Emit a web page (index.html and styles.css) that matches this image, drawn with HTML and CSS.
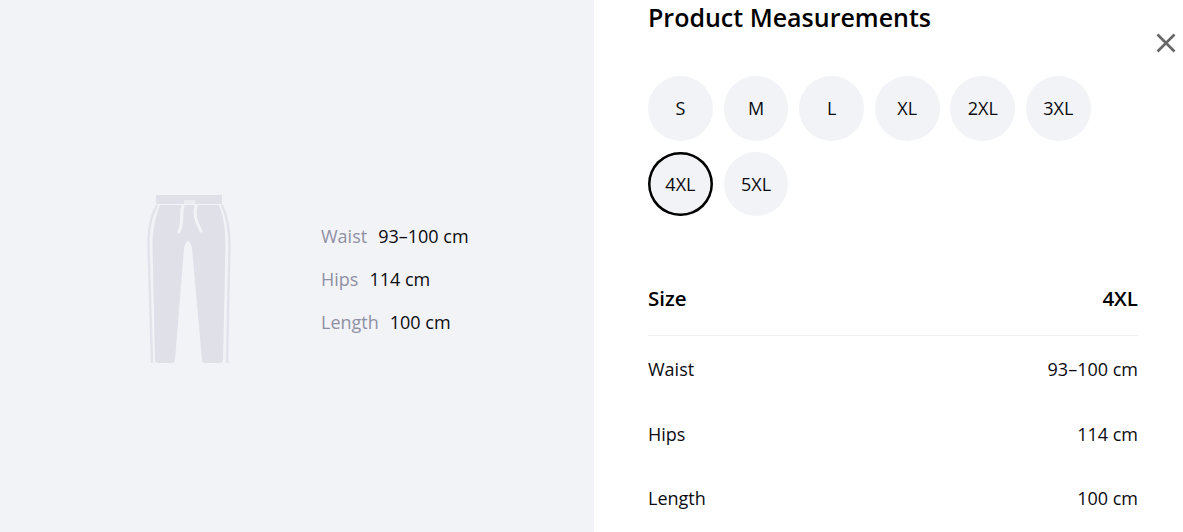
FILE: index.html
```html
<!DOCTYPE html>
<html lang="en">
<head>
<meta charset="utf-8">
<title>Product Measurements</title>
<link rel="stylesheet" href="styles.css">
</head>
<body>
<main class="modal">
  <section class="preview">
    <svg class="pants" width="120" height="195" viewBox="0 0 120 195" aria-hidden="true">
      <rect class="garment" x="26" y="15" width="66" height="9"/>
      <path class="garment" d="M30 25H89C94 38 95.500 50 95.500 66L93 180Q93 183 90 183H75Q72 183 72 180L62 68Q60 61 58 61T54 68L45 180Q45 183 42 183H28Q25 183 25 180L22.500 66C22.500 50 25 38 30 25Z"/>
      <path class="edge" d="M27 25C20 38 18.500 50 18.500 66L22 183M92 25C98 38 99.500 50 99.500 66L97 183"/>
      <path class="string" d="M53 26C50 34 54 40 49 52M66 26C63 34 66 42 71 51"/>
      <rect class="tag" x="54" y="20" width="11" height="5"/>
    </svg>
    <dl class="summary">
      <div class="summary-row"><dt>Waist</dt><dd>93–100 cm</dd></div>
      <div class="summary-row"><dt>Hips</dt><dd>114 cm</dd></div>
      <div class="summary-row"><dt>Length</dt><dd>100 cm</dd></div>
    </dl>
  </section>
  <section class="details">
    <h1>Product Measurements</h1>
    <button class="close" aria-label="Close">
      <svg width="20" height="20" viewBox="0 0 20 20"><path d="M1.500 1.500L18.500 18.500M18.500 1.500L1.500 18.500"/></svg>
    </button>
    <div class="sizes">
      <button class="size">S</button>
      <button class="size">M</button>
      <button class="size">L</button>
      <button class="size">XL</button>
      <button class="size">2XL</button>
      <button class="size">3XL</button>
      <button class="size selected">4XL</button>
      <button class="size">5XL</button>
    </div>
    <div class="row head"><span>Size</span><span>4XL</span></div>
    <div class="row"><span>Waist</span><span>93–100 cm</span></div>
    <div class="row"><span>Hips</span><span>114 cm</span></div>
    <div class="row"><span>Length</span><span>100 cm</span></div>
  </section>
</main>
</body>
</html>
```
FILE: styles.css
```css
* { box-sizing: border-box; }
html, body { margin: 0; height: 100%; overflow: hidden; background: #fff; }
body { font-family: "Open Sans", "Noto Sans", sans-serif; color: #0b0b10; }
.modal { display: flex; width: 1183px; height: 532px; overflow: hidden; }
.preview {
  width: 594px; height: 532px; flex: none; background: #f2f3f7;
  display: flex; align-items: flex-start; padding: 180px 0 0 130px;
}
.pants { flex: none; display: block; }
.garment { fill: #dfe0e8; }
.edge { fill: none; stroke: #e2e3ea; stroke-width: 2.5; }
.string { fill: none; stroke: #f2f3f7; stroke-width: 3; stroke-linecap: round; }
.tag { fill: #f2f3f7; opacity: .6; }
.summary { margin: 35px 0 0 71px; font-size: 18px; }
.summary-row { display: flex; gap: 11px; height: 43px; line-height: 43px; }
.summary dt { color: #8f90a3; }
.summary dd { margin: 0; }
.details { position: relative; flex: none; width: 589px; padding: 0 0 0 54px; }
h1 { margin: 0; font-size: 25px; line-height: 34px; font-weight: 600; color: #000; }
.close {
  position: absolute; top: 33px; left: 562px; width: 20px; height: 20px;
  padding: 0; border: 0; background: none;
}
.close svg { display: block; }
.close path { fill: none; stroke: #666; stroke-width: 2.6; }
.sizes { display: flex; flex-wrap: wrap; gap: 11px 10.8px; width: 490px; padding-top: 42px; height: 230px; align-content: flex-start; }
.size {
  width: 64.800px; height: 64.500px; padding: 0; border: 0; border-radius: 50%;
  background: #f2f3f7; color: #0b0b10; font: 18px "Open Sans", sans-serif;
}
.selected { box-shadow: inset 0 0 0 2.5px #000; }
.row {
  display: flex; justify-content: space-between; width: 490px; height: 64.500px;
  align-items: center; font-size: 18px;
}
.head {
  height: 72px; margin-bottom: 1px; padding-bottom: 4px; border-bottom: 1px solid #f0f0f3;
  font-size: 20.500px; font-weight: 600; color: #000;
}
```
